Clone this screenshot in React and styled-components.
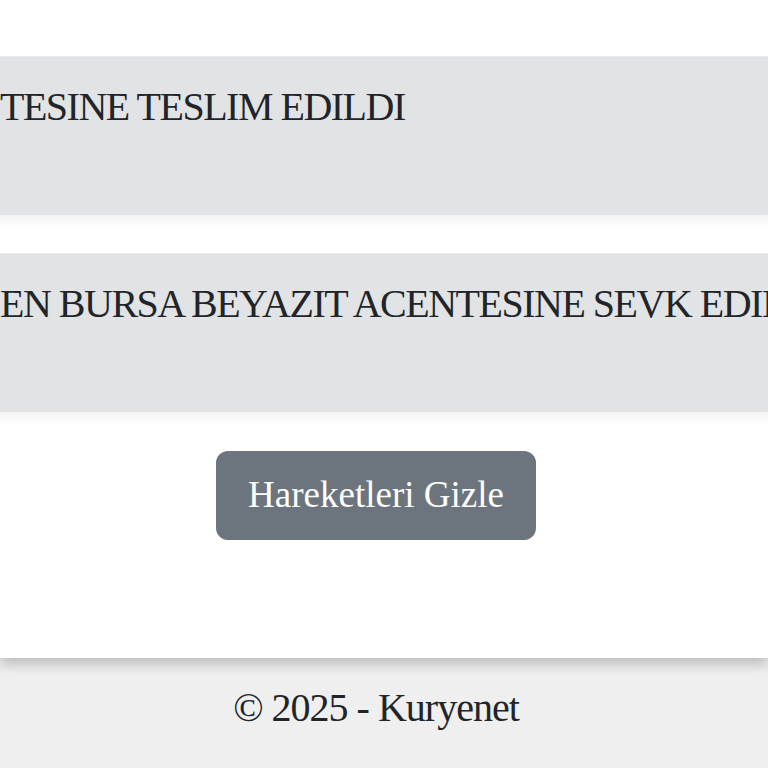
import React from "react";
import styled, { createGlobalStyle } from "styled-components";

const GlobalStyle = createGlobalStyle`
  html, body {
    margin: 0;
    padding: 0;
    overflow: hidden;
    background: #efefef;
  }
  body {
    font-family: "Liberation Serif", "Times New Roman", serif;
    color: #212529;
  }
`;

const Page = styled.div`
  display: flex;
  flex-direction: column;
  min-height: 768px;
`;

const Main = styled.main`
  position: relative;
  z-index: 1;
  background: #ffffff;
  padding: 56px 0 118px;
  box-shadow: 0 6px 12px rgba(0, 0, 0, 0.22);
`;

const Container = styled.div`
  width: 800px;
  margin-left: -24px;
  display: flex;
  flex-direction: column;
  gap: 38px;
`;

const Movement = styled.div`
  box-sizing: border-box;
  min-height: 159px;
  padding: 20px 24px;
  background: #e2e3e5;
  border-top: 1px solid #ebebed;
  box-shadow: 0 6px 10px rgba(0, 0, 0, 0.05);
  overflow: hidden;
`;

const MovementText = styled.div`
  font-size: 40px;
  line-height: 60px;
  letter-spacing: -1.5px;
  white-space: nowrap;
`;

const Actions = styled.div`
  display: flex;
  justify-content: center;
  margin-top: 1px;
`;

const Button = styled.button`
  font-family: "Liberation Serif", "Times New Roman", serif;
  font-size: 37px;
  line-height: 52px;
  color: #ffffff;
  background: #6c757d;
  border: none;
  border-radius: 12px;
  padding: 18px 32px 19px;
  cursor: pointer;
`;

const Footer = styled.footer`
  flex: 1;
  background: #efefef;
  padding-top: 20px;
`;

const FooterInner = styled.div`
  width: 800px;
  margin-left: -24px;
  text-align: center;
  font-size: 40px;
  line-height: 60px;
  letter-spacing: -1px;
`;

const movements = [
  "TESINE TESLIM EDILDI",
  "EN BURSA BEYAZIT ACENTESINE SEVK EDILDI",
];

export default function App() {
  return (
    <>
      <GlobalStyle />
      <Page>
        <Main>
          <Container>
            {movements.map((text, i) => (
              <Movement key={i}>
                <MovementText>{text}</MovementText>
              </Movement>
            ))}
            <Actions>
              <Button>Hareketleri Gizle</Button>
            </Actions>
          </Container>
        </Main>
        <Footer>
          <FooterInner>© 2025 - Kuryenet</FooterInner>
        </Footer>
      </Page>
    </>
  );
}
